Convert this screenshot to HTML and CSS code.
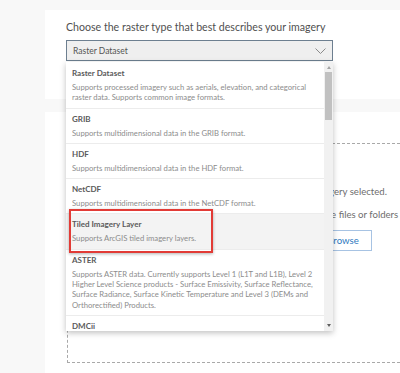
FILE: index.html
```html
<!DOCTYPE html>
<html lang="en">
<head>
    <meta charset="UTF-8">
    <meta name="viewport" content="width=device-width, initial-scale=1.0">
    <title>Add imagery - raster type</title>
    <link rel="stylesheet" href="styles.css">
</head>
<body>
    <div class="page">
        <section class="panel panel-type">
            <h2 class="panel-title">Choose the raster type that best describes your imagery</h2>
            <div class="select-wrap">
                <div class="select">
                    <span>Raster Dataset</span>
                    <svg class="chevron" width="11" height="6" viewBox="0 0 11 6"><path d="M0.5 0.5 L5.5 5.5 L10.5 0.5" fill="none" stroke="#8a8a8a" stroke-width="1"/></svg>
                </div>
                <div class="dropdown">
                    <ul class="options">
                        <li class="option">
                            <div class="opt-title">Raster Dataset</div>
                            <div class="opt-desc">Supports processed imagery such as aerials, elevation, and categorical<br>raster data. Supports common image formats.</div>
                        </li>
                        <li class="option">
                            <div class="opt-title">GRIB</div>
                            <div class="opt-desc">Supports multidimensional data in the GRIB format.</div>
                        </li>
                        <li class="option">
                            <div class="opt-title">HDF</div>
                            <div class="opt-desc">Supports multidimensional data in the HDF format.</div>
                        </li>
                        <li class="option">
                            <div class="opt-title">NetCDF</div>
                            <div class="opt-desc">Supports multidimensional data in the NetCDF format.</div>
                        </li>
                        <li class="option is-hover">
                            <div class="opt-title">Tiled Imagery Layer</div>
                            <div class="opt-desc">Supports ArcGIS tiled imagery layers.</div>
                            <span class="callout"></span>
                        </li>
                        <li class="option">
                            <div class="opt-title">ASTER</div>
                            <div class="opt-desc">Supports ASTER data. Currently supports Level 1 (L1T and L1B), Level 2<br>Higher Level Science products - Surface Emissivity, Surface Reflectance,<br>Surface Radiance, Surface Kinetic Temperature and Level 3 (DEMs and<br>Orthorectified) Products.</div>
                        </li>
                        <li class="option">
                            <div class="opt-title">DMCii</div>
                            <div class="opt-desc">Supports DMCii data.</div>
                        </li>
                    </ul>
                    <div class="scrollbar">
                        <span class="arrow arrow-up"></span>
                        <div class="thumb"></div>
                        <span class="arrow arrow-down"></span>
                    </div>
                </div>
            </div>
        </section>
        <section class="panel panel-upload">
            <div class="dropzone">
                <p class="drop-text">No imagery selected.</p>
                <p class="drop-text drop-hint">Drag and drop image files or folders here</p>
                <button class="browse">Browse</button>
            </div>
        </section>
    </div>
</body>
</html>
```
FILE: styles.css
```css
body {
    margin: 0;
    background-color: #f8f8f8;
    font-family: Lato, "Noto Sans", sans-serif;
    overflow: hidden;
}
.page {
    display: flex;
    flex-direction: column;
    gap: 13px;
    width: 592px;
    padding: 10px 0 0 45px;
}
.panel {
    background: #ffffff;
    padding: 0 22px 0 21px;
}
.panel-type {
    height: 80px;
    padding-top: 9px;
}
.panel-title {
    margin: 0 0 5px;
    font-size: 10.6px;
    font-weight: 400;
    line-height: 16px;
    color: #505050;
}
.select-wrap {
    position: relative;
    width: 267px;
}
.select {
    height: 21px;
    box-sizing: border-box;
    border: 1px solid #6d7f90;
    background: #efefef;
    display: flex;
    align-items: center;
    justify-content: space-between;
    padding: 0 6px;
    font-size: 8.5px;
    color: #555555;
}
.dropdown {
    position: absolute;
    top: 22px;
    left: 0;
    width: 267px;
    height: 269px;
    display: flex;
    background: #ffffff;
    box-shadow: 0 2px 6px rgba(0, 0, 0, 0.25);
    z-index: 2;
}
.options {
    flex: 1;
    list-style: none;
    margin: 0;
    padding: 0;
    overflow: hidden;
}
.option {
    padding: 5px 6px;
    border-bottom: 1px solid #ececec;
}
.option:first-child {
    padding-top: 6px;
}
.option.is-hover {
    position: relative;
    background: #f3f3f3;
}
.opt-title {
    font-size: 8px;
    line-height: 10px;
    font-weight: 700;
    color: #5a5a5a;
}
.opt-desc {
    margin-top: 4px;
    font-size: 7.7px;
    line-height: 10.3px;
    color: #8c8c8c;
}
.callout {
    position: absolute;
    left: 3px;
    top: -5px;
    width: 144px;
    height: 44px;
    box-sizing: border-box;
    border: 2px solid #e23b36;
    box-shadow: 0 1px 3px rgba(0, 0, 0, 0.3);
}
.scrollbar {
    width: 9px;
    background: #f1f1f1;
    display: flex;
    flex-direction: column;
    align-items: center;
}
.arrow {
    width: 0;
    height: 0;
    border-left: 2.5px solid transparent;
    border-right: 2.5px solid transparent;
}
.arrow-up {
    margin-top: 4px;
    border-bottom: 3px solid #a3a3a3;
}
.arrow-down {
    margin-top: auto;
    margin-bottom: 4px;
    border-top: 3px solid #606060;
}
.thumb {
    width: 7px;
    height: 48px;
    margin-top: 3px;
    background: #c1c1c1;
}
.panel-upload {
    height: 300px;
    padding-top: 31px;
}
.dropzone {
    height: 220px;
    box-sizing: border-box;
    margin-left: 1px;
    border: 1px dashed #a9a9a9;
    display: flex;
    flex-direction: column;
    align-items: center;
    padding: 40px 0 0 4px;
}
.drop-text {
    margin: 0 0 7px;
    font-size: 9.6px;
    line-height: 16px;
    color: #6e6e6e;
}
.drop-hint {
    padding-right: 18px;
}
.browse {
    height: 21px;
    padding: 0 12px;
    border: 1px solid #a7c3e3;
    background: #ffffff;
    color: #2f7ac0;
    font-family: Lato, "Noto Sans", sans-serif;
    font-size: 9.6px;
}
```
